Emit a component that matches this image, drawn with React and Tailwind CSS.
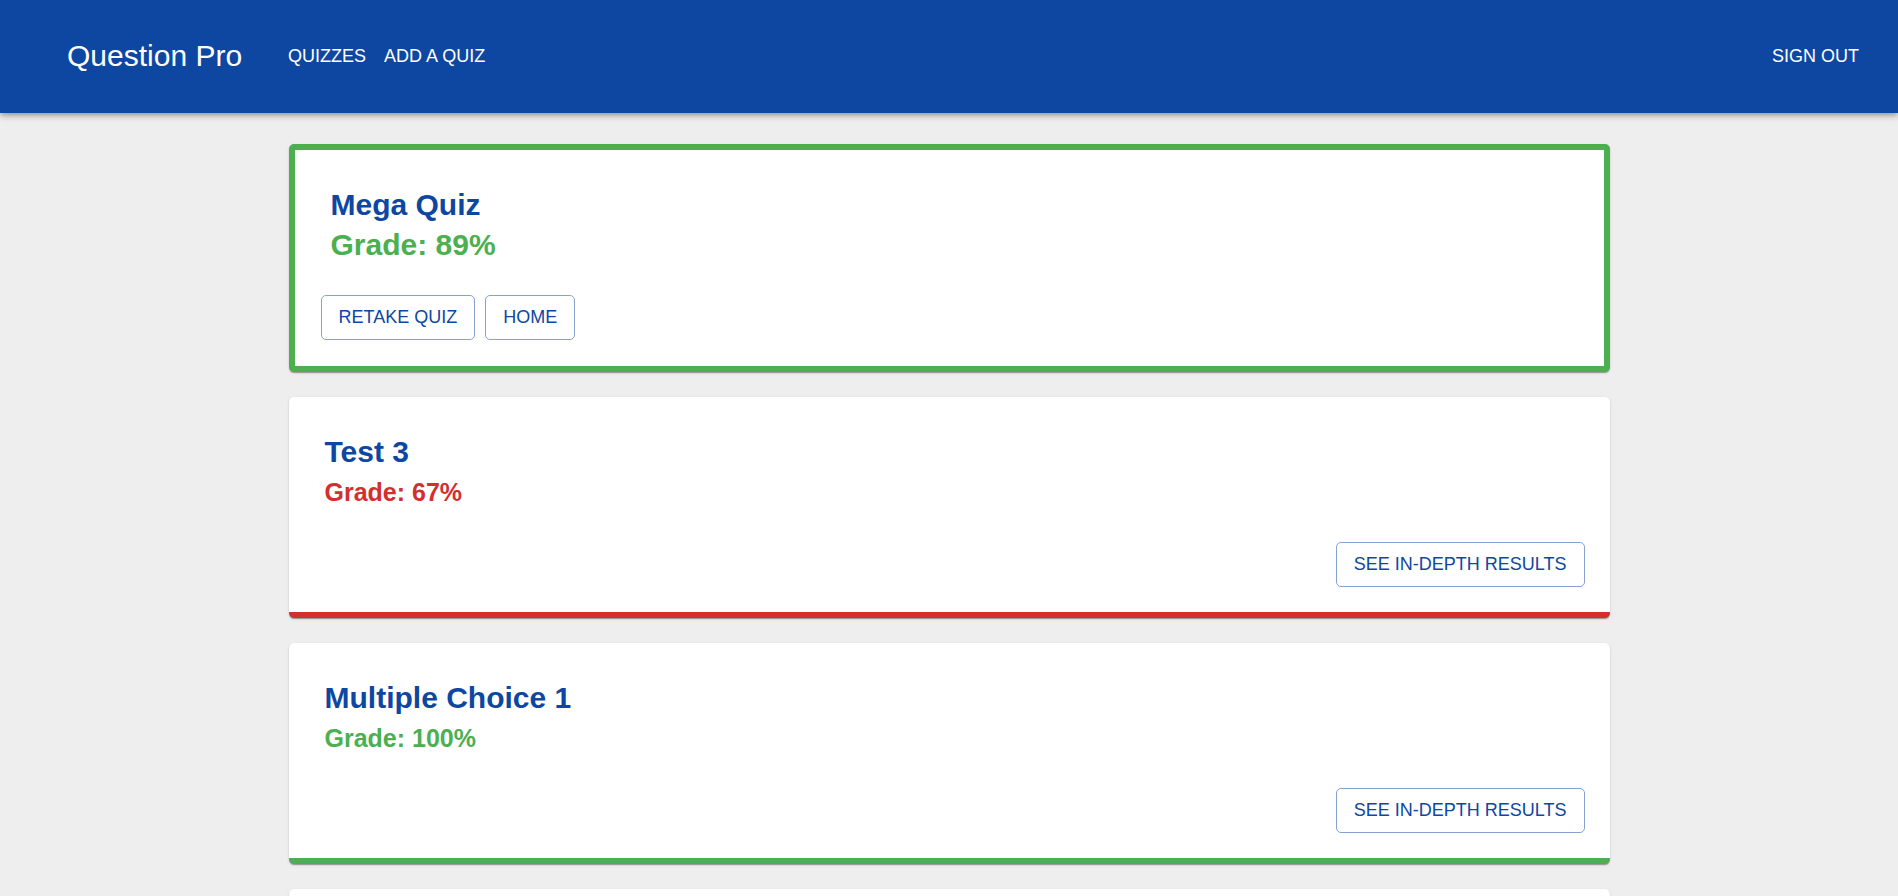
const results = [
  { title: 'Test 3', grade: 67, passed: false },
  { title: 'Multiple Choice 1', grade: 100, passed: true },
];

const cardShadow =
  'shadow-[0_2px_1px_-1px_rgba(0,0,0,0.2),0_1px_1px_0_rgba(0,0,0,0.14),0_1px_3px_0_rgba(0,0,0,0.12)]';

function OutlinedButton({ children }) {
  return (
    <button
      type="button"
      className="h-[45px] rounded-[5px] border border-[#86a3d0] px-[17px] pb-[2px] text-[18px] leading-7 text-[#0d47a1] uppercase hover:bg-[#0d47a1]/5"
    >
      {children}
    </button>
  );
}

function NavBar() {
  return (
    <header className="relative flex h-[113px] items-center bg-[#0d47a1] pr-[39px] pb-[2px] pl-[67px] text-white shadow-[0_2px_4px_-1px_rgba(0,0,0,0.2),0_4px_5px_0_rgba(0,0,0,0.14),0_1px_10px_0_rgba(0,0,0,0.12)]">
      <a href="#home" className="text-[30px] leading-10">
        Question Pro
      </a>
      <nav className="ml-[46px] flex flex-1 items-center gap-[18px] text-[18px] leading-7 uppercase">
        <a href="#quizzes">Quizzes</a>
        <a href="#add">Add a quiz</a>
        <a href="#signout" className="ml-auto">
          Sign out
        </a>
      </nav>
    </header>
  );
}

function SummaryCard() {
  return (
    <section
      className={`rounded-[5px] border-6 border-[#4caf50] bg-white px-[26px] pt-[35px] pb-[26px] ${cardShadow}`}
    >
      <div className="px-[10px] text-[30px] leading-10 font-bold">
        <h1 className="text-[#0d47a1]">Mega Quiz</h1>
        <p className="text-[#4caf50]">Grade: 89%</p>
      </div>
      <div className="mt-[30px] flex gap-[10px]">
        <OutlinedButton>Retake quiz</OutlinedButton>
        <OutlinedButton>Home</OutlinedButton>
      </div>
    </section>
  );
}

function ResultCard({ title, grade, passed }) {
  return (
    <section
      className={`rounded-[5px] border-b-6 bg-white px-[25px] pt-[35px] pb-[25px] ${
        passed ? 'border-[#4caf50]' : 'border-[#d32f2f]'
      } ${cardShadow}`}
    >
      <div className="px-[11px] font-bold">
        <h2 className="text-[30px] leading-10 text-[#0d47a1]">{title}</h2>
        <p className={`text-[25px] leading-10 ${passed ? 'text-[#4caf50]' : 'text-[#d32f2f]'}`}>
          Grade: {grade}%
        </p>
      </div>
      <div className="mt-[30px] flex justify-end">
        <OutlinedButton>See in-depth results</OutlinedButton>
      </div>
    </section>
  );
}

export default function App() {
  return (
    <div className="flex min-h-screen flex-col bg-[#eeeeee] font-['Liberation_Sans',Arial,sans-serif]">
      <NavBar />
      <main className="mx-auto flex w-full max-w-[1321px] flex-1 flex-col gap-[25px] pt-[31px]">
        <SummaryCard />
        {results.map((result) => (
          <ResultCard key={result.title} {...result} />
        ))}
        <section className={`flex-1 rounded-t-[5px] bg-white ${cardShadow}`} />
      </main>
    </div>
  );
}
